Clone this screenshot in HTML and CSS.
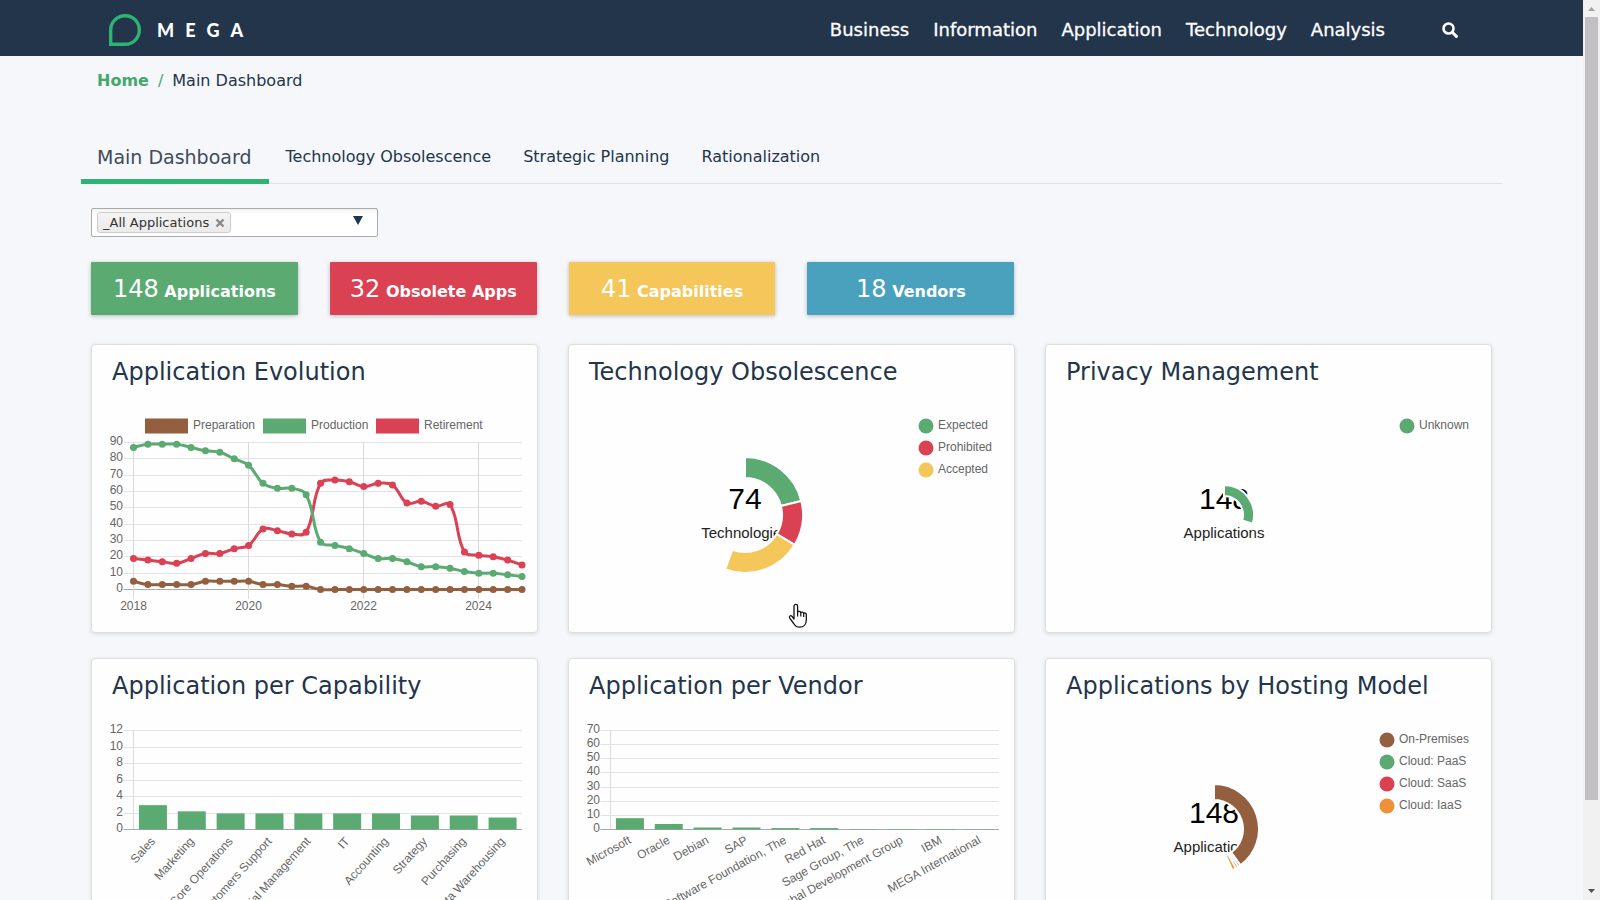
FILE: index.html
```html
<!DOCTYPE html>
<html lang="en">
<head>
    <meta charset="UTF-8">
    <meta name="viewport" content="width=device-width, initial-scale=1.0">
    <title>Main Dashboard</title>
    <link rel="stylesheet" href="styles.css">
</head>
<body>
    <div class="page">
        <header class="navbar">
            <a class="logo" href="#" aria-label="MEGA">
                <svg class="logo-mark" viewBox="0 0 32 32" width="32" height="32">
                    <path d="M1.7 30.3V16A14.3 14.3 0 0 1 16 1.7h.6a13.7 14.3 0 0 1 0 28.6z" fill="none" stroke="#2fb374" stroke-width="3.4"/>
                </svg>
                <span class="logo-name"><b>M</b><b>E</b><b>G</b><b>A</b></span>
            </a>
            <nav class="menu">
                <a href="#">Business</a>
                <a href="#">Information</a>
                <a href="#">Application</a>
                <a href="#">Technology</a>
                <a href="#">Analysis</a>
            </nav>
            <button class="search" type="button" aria-label="Search">
                <svg viewBox="0 0 16 16" width="16" height="16">
                    <circle cx="6.5" cy="6.5" r="5" fill="none" stroke="#fff" stroke-width="2.6"/>
                    <path d="M10.2 10.2l4.2 4.2" stroke="#fff" stroke-width="3" stroke-linecap="round"/>
                </svg>
            </button>
        </header>

        <main class="content">
            <div class="breadcrumb">
                <a href="#">Home</a><span class="sep">/</span><span>Main Dashboard</span>
            </div>

            <nav class="tabs">
                <a class="active" href="#">Main Dashboard</a>
                <a href="#">Technology Obsolescence</a>
                <a href="#">Strategic Planning</a>
                <a href="#">Rationalization</a>
            </nav>

            <div class="board">
                <div class="filter">
                    <span class="chip">_All Applications
                        <button type="button" aria-label="Remove _All Applications">
                            <svg viewBox="0 0 10 10" width="10" height="10"><path d="M1.5 1.5l7 7M8.5 1.5l-7 7" stroke="#888" stroke-width="2.4"/></svg>
                        </button>
                    </span>
                    <select aria-label="Application filter"><option></option></select>
                    <svg class="arrow" viewBox="0 0 10 9" width="10" height="9"><path d="M0 0h10L5 9z" fill="#1f344d"/></svg>
                </div>

                <div class="counters">
                    <a class="counter green" href="#"><span>148</span> Applications</a>
                    <a class="counter red" href="#"><span>32</span> Obsolete Apps</a>
                    <a class="counter yellow" href="#"><span>41</span> Capabilities</a>
                    <a class="counter blue" href="#"><span>18</span> Vendors</a>
                </div>

                <div class="cards">
                    <section class="card">
                        <h2>Application Evolution</h2>
                        <svg class="chart" id="evolution" viewBox="0 0 445 235"></svg>
                    </section>
                    <section class="card">
                        <h2>Technology Obsolescence</h2>
                        <svg class="chart" id="obsolescence" viewBox="0 0 445 235"></svg>
                        <svg class="pointer" viewBox="0 0 20 26" width="20" height="26">
                            <path d="M6 16V3.2a1.8 1.8 0 0 1 3.6 0V9c.4-1 3-.9 3.2.6.6-.9 2.7-.6 2.9.8.8-.8 2.6-.3 2.6 1.3V17c0 4-2.4 7.2-6.6 7.2-3.400 0-4.900-1.600-6.400-4.200L1.600 14.800c-.8-1.600 1-2.800 2.300-1.600z" fill="#fff" stroke="#111" stroke-width="1.3" stroke-linejoin="round"/>
                            <path d="M9.600 9v4.500M12.800 9.600v4M15.700 10.500v3.500" stroke="#111" stroke-width="1.2"/>
                        </svg>
                    </section>
                    <section class="card">
                        <h2>Privacy Management</h2>
                        <svg class="chart" id="privacy" viewBox="0 0 445 235"></svg>
                    </section>
                    <section class="card">
                        <h2>Application per Capability</h2>
                        <svg class="chart" id="capability" viewBox="0 0 445 235"></svg>
                    </section>
                    <section class="card">
                        <h2>Application per Vendor</h2>
                        <svg class="chart" id="vendor" viewBox="0 0 445 235"></svg>
                    </section>
                    <section class="card">
                        <h2>Applications by Hosting Model</h2>
                        <svg class="chart" id="hosting" viewBox="0 0 445 235"></svg>
                    </section>
                </div>
            </div>
        </main>
    </div>

    <div class="scrollbar" aria-hidden="true">
        <svg viewBox="0 0 17 17" width="17" height="17"><path d="M5 11h7L8.500 7z" fill="#a3a3a3"/></svg>
        <div class="thumb"></div>
        <svg viewBox="0 0 17 17" width="17" height="17"><path d="M5 6h7l-3.500 4z" fill="#505050"/></svg>
    </div>

    <script src="charts.js"></script>
</body>
</html>
```
FILE: styles.css
```css
* {
    box-sizing: border-box;
}

body {
    margin: 0;
    height: 100vh;
    display: flex;
    overflow: hidden;
    background-color: #f5f7fa;
    color: #22354b;
    font-family: Verdana, "DejaVu Sans", sans-serif;
    font-size: 16px;
}

a {
    color: inherit;
    text-decoration: none;
}

button {
    padding: 0;
    border: none;
    background: none;
    cursor: pointer;
}

.page {
    flex: 1;
    min-width: 0;
    overflow-y: auto;
    scrollbar-width: none;
}

/* Header */
.navbar {
    display: flex;
    align-items: center;
    height: 56px;
    padding: 4px 125px 0 109px;
    background-color: #22354b;
    color: #fff;
}

.logo {
    display: flex;
    align-items: center;
    gap: 16px;
    margin-right: auto;
}

.logo-name {
    display: flex;
    gap: 11px;
    font-family: Lato, sans-serif;
    font-size: 18px;
    font-weight: 900;
}

.menu {
    display: flex;
    gap: 24px;
    padding-bottom: 2px;
    font-size: 18px;
    -webkit-text-stroke: 0.3px #fff;
}

.search {
    display: flex;
    margin-left: 57px;
}

/* Breadcrumb and tabs */
.content {
    padding: 0 81px 24px;
}

.breadcrumb {
    padding: 15px 16px 0;
    line-height: 20px;
}

.breadcrumb a {
    color: #45a76b;
    font-weight: bold;
}

.sep {
    margin: 0 9px;
    color: #45a76b;
}

.tabs {
    display: flex;
    margin-top: 45px;
    border-bottom: 1px solid #dde1e4;
}

.tabs a {
    padding: 9px 16px 0;
    height: 47px;
    line-height: 24px;
}

.tabs .active {
    height: 48px;
    padding-right: 18px;
    margin-bottom: -1px;
    border-bottom: 5px solid #2fb374;
    color: #3f4c5a;
    font-size: 19px;
}

.board {
    padding: 24px 10px 0;
}

/* Filter */
.filter {
    position: relative;
    display: flex;
    align-items: center;
    width: 287px;
    height: 29px;
    padding-left: 5px;
    border: 1px solid #aaa;
    border-radius: 2px;
    background: linear-gradient(#f2f2f2, #fff 20%);
}

.chip {
    display: flex;
    align-items: center;
    gap: 6px;
    height: 21px;
    padding: 0 5px;
    border: 1px solid #ccc;
    border-radius: 3px;
    background: linear-gradient(#f4f4f4, #eaeaea);
    color: #333;
    font-size: 13px;
    white-space: nowrap;
}

.chip button,
.chip svg {
    display: block;
}

.filter select {
    flex: 1;
    height: 100%;
    border: none;
    background: none;
    appearance: none;
}

.arrow {
    position: absolute;
    top: 7px;
    right: 14px;
    pointer-events: none;
}

/* Counters */
.counters {
    display: grid;
    grid-template-columns: repeat(6, 1fr);
    gap: 32px;
    margin: 25px 0 29px;
}

.counter {
    height: 53px;
    line-height: 54px;
    border-radius: 1px;
    box-shadow: 0 1px 4px rgba(0, 0, 0, 0.25);
    color: #fff;
    font-weight: bold;
    text-align: center;
    white-space: nowrap;
}

.counter span {
    font-size: 24px;
    font-weight: normal;
}

.green { background-color: #5aaa72; }
.red { background-color: #da4152; }
.yellow { background-color: #f5c65a; }
.blue { background-color: #4aa1bd; }

/* Cards */
.cards {
    display: grid;
    grid-template-columns: repeat(3, 1fr);
    gap: 25px 30px;
}

.card {
    position: relative;
    border: 1px solid #dcdfe2;
    border-radius: 4px;
    background-color: #fefefe;
    box-shadow: 0 1px 4px rgba(0, 0, 0, 0.12);
}

.card h2 {
    margin: 0;
    padding: 12px 20px 10px;
    font-size: 24px;
    font-weight: normal;
    line-height: 30px;
}

.chart {
    display: block;
    width: 100%;
    overflow: visible;
    font-family: "Liberation Sans", Arial, sans-serif;
    font-size: 12px;
    fill: #666;
}

.chart .total {
    fill: #000;
    font-size: 30px;
    text-anchor: middle;
}

.chart .unit {
    fill: #222;
    font-size: 15px;
    text-anchor: middle;
}

.chart .end {
    text-anchor: end;
}

.chart .mid {
    text-anchor: middle;
}

.pointer {
    position: absolute;
    left: 219px;
    bottom: 3px;
}

/* Scrollbar */
.scrollbar {
    display: flex;
    flex-direction: column;
    width: 17px;
    background-color: #f1f1f1;
}

.thumb {
    height: 87%;
    margin: 0 2px auto;
    background-color: #c1bfc1;
}
```
FILE: charts.js
```js
const GREEN = '#5aaa72';
const RED = '#da4152';
const YELLOW = '#f5c65a';
const BROWN = '#935f3f';
const ORANGE = '#ef913a';

const LEFT = 41.5;
const RIGHT = 430;

function line(x1, y1, x2, y2, color) {
    return `<line x1="${x1}" y1="${y1}" x2="${x2}" y2="${y2}" stroke="${color}"/>`;
}

function text(x, y, value, cls) {
    return `<text x="${x}" y="${y}" class="${cls || ''}">${value}</text>`;
}

// horizontal grid with the value axis
function grid(top, bottom, max, step) {
    let out = '';
    for (let v = 0; v <= max; v += step) {
        const y = Math.round(bottom - (bottom - top) * v / max) + 0.5;
        out += line(LEFT - 10, y, RIGHT, y, v ? '#e3e3e6' : '#a9a9a9');
        out += text(31, y + 2.5, v, 'end');
    }
    return out + line(LEFT, top, LEFT, bottom, '#dcdce0');
}

// smooth curve, tension 0.4
function curve(pts) {
    const ctrl = pts.map((p, i) => {
        const a = pts[i - 1] || p;
        const b = pts[i + 1] || p;
        const d1 = Math.hypot(p[0] - a[0], p[1] - a[1]);
        const d2 = Math.hypot(b[0] - p[0], b[1] - p[1]);
        const f1 = 0.4 * d1 / (d1 + d2);
        const f2 = 0.4 * d2 / (d1 + d2);
        return {
            before: [p[0] - f1 * (b[0] - a[0]), p[1] - f1 * (b[1] - a[1])],
            after: [p[0] + f2 * (b[0] - a[0]), p[1] + f2 * (b[1] - a[1])]
        };
    });
    let d = `M${pts[0]}`;
    for (let i = 1; i < pts.length; i++) {
        d += `C${ctrl[i - 1].after} ${ctrl[i].before} ${pts[i]}`;
    }
    return d;
}

function lineChart(id, series) {
    const top = 45;
    const bottom = 192;
    const step = (RIGHT - LEFT) / 27;
    let out = grid(top, bottom, 90, 10);
    [2018, 2020, 2022, 2024].forEach((year, i) => {
        const x = LEFT + Math.round(i * 8 * step);
        out += line(x, top, x, bottom + 10, '#d9d9de');
        out += text(x, 213, year, 'mid');
    });
    [...series].reverse().forEach(s => {
        const pts = s.data.map((v, i) => [LEFT + i * step, bottom + 0.5 - v * (bottom - top) / 90]);
        out += `<path d="${curve(pts)}" fill="none" stroke="${s.color}" stroke-width="3"/>`;
        pts.forEach(p => {
            out += `<circle cx="${p[0]}" cy="${p[1]}" r="3.5" fill="${s.color}"/>`;
        });
    });
    series.forEach(s => {
        out += `<rect x="${s.x}" y="21.5" width="43" height="15" fill="${s.color}"/>`;
        out += text(s.x + 48, 32, s.name);
    });
    document.getElementById(id).innerHTML = out;
}

function barChart(id, max, step, angle, data) {
    const top = 19;
    const bottom = 118;
    const slot = (RIGHT - LEFT) / data.length;
    let out = '';
    data.forEach(([name, value], i) => {
        const h = value * (bottom - top) / max;
        const x = LEFT + slot * (i + 0.5);
        out += `<rect x="${x - 14}" y="${bottom + 0.5 - h}" width="28" height="${h}" fill="${GREEN}"/>`;
        out += `<text class="end" dy="4" transform="translate(${x} ${bottom + 10}) rotate(${angle})">${name}</text>`;
    });
    document.getElementById(id).innerHTML = grid(top, bottom, max, step) + out;
}

function doughnut(id, o) {
    const cy = 118;
    const at = (r, deg) => [
        o.cx + r * Math.cos(deg * Math.PI / 180),
        cy + r * Math.sin(deg * Math.PI / 180)
    ];
    let out = text(o.cx, 112, o.total, 'total') + text(o.cx, 141, o.unit, 'unit');
    let from = -90;
    o.parts.forEach(([name, color, to], i) => {
        if (to > from) {
            out += `<path d="M${at(o.outer, from)}A${o.outer} ${o.outer} 0 0 1 ${at(o.outer, to)}` +
                `L${at(o.inner, to)}A${o.inner} ${o.inner} 0 0 0 ${at(o.inner, from)}Z" ` +
                `fill="${color}" stroke="#fff" stroke-width="2"/>`;
            from = to;
        }
        out += `<circle cx="${o.legend}" cy="${29 + i * 22}" r="7.5" fill="${color}"/>`;
        out += text(o.legend + 12, 32 + i * 22, name);
    });
    document.getElementById(id).innerHTML = out;
}

lineChart('evolution', [
    { name: 'Preparation', color: BROWN, x: 53, data: [5, 3, 3, 3, 3, 5, 5, 5, 5, 3, 3, 2, 2, 0, 0, 0, 0, 0, 0, 0, 0, 0, 0, 0, 0, 0, 0, 0] },
    { name: 'Production', color: GREEN, x: 171, data: [87, 89, 89, 89, 87, 85, 84, 80, 76, 65, 62, 62, 58, 29, 27, 25, 22, 19, 19, 17, 14, 14, 13, 11, 10, 10, 9, 8] },
    { name: 'Retirement', color: RED, x: 284, data: [19, 18, 17, 16, 19, 22, 22, 25, 27, 37, 36, 34, 35, 65, 67, 66, 63, 65, 64, 53, 54, 51, 52, 23, 21, 20, 18, 15] }
]);

doughnut('obsolescence', {
    cx: 176, outer: 58, inner: 37, legend: 357, total: 74, unit: 'Technologies',
    parts: [['Expected', GREEN, -14], ['Prohibited', RED, 31], ['Accepted', YELLOW, 110]]
});

doughnut('privacy', {
    cx: 178, outer: 30, inner: 19, legend: 361, total: 148, unit: 'Applications',
    parts: [['Unknown', GREEN, 17]]
});

doughnut('hosting', {
    cx: 168, outer: 45, inner: 29, legend: 341, total: 148, unit: 'Applications',
    parts: [['On-Premises', BROWN, 54], ['Cloud: PaaS', GREEN, 57.5], ['Cloud: SaaS', RED, 61], ['Cloud: IaaS', ORANGE, 66]]
});

barChart('capability', 12, 2, -48, [
    ['Sales', 2.95], ['Marketing', 2.2], ['Core Operations', 1.95], ['Customers Support', 1.95],
    ['Financial Management', 1.95], ['IT', 1.95], ['Accounting', 1.95], ['Strategy', 1.7],
    ['Purchasing', 1.7], ['Data Warehousing', 1.45]
]);

barChart('vendor', 70, 10, -29, [
    ['Microsoft', 8], ['Oracle', 3.9], ['Debian', 1.4], ['SAP', 1.4],
    ['Apache Software Foundation, The', 1], ['Red Hat', 1], ['Sage Group, The', 0.3],
    ['PostgreSQL Global Development Group', 0.3], ['IBM', 0.3], ['MEGA International', 0.2]
]);
```
